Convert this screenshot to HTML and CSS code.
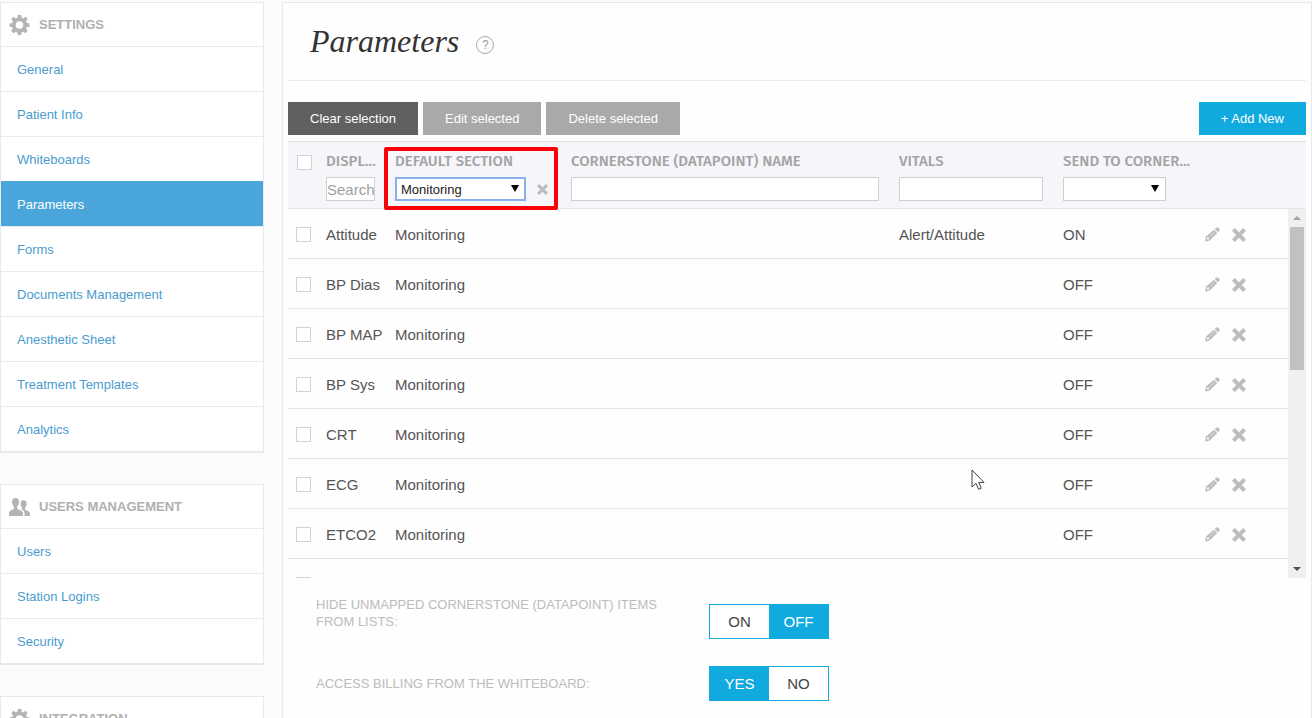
FILE: index.html
```html
<!DOCTYPE html>
<html lang="en">
<head>
  <meta charset="UTF-8">
  <meta name="viewport" content="width=device-width, initial-scale=1.0">
  <title>Parameters</title>
  <link rel="stylesheet" href="styles.css">
</head>
<body>
  <!-- Shared icons -->
  <svg class="sprite" aria-hidden="true">
    <symbol id="icon-gear" viewBox="0 0 20 20">
      <path fill-rule="evenodd" d="M8.300 0h3.400l.5 2.700 1.600.7L16 1.800 18.200 4l-1.600 2.300.7 1.600 2.700.5v3.300l-2.700.5-.7 1.600 1.600 2.300-2.200 2.200-2.300-1.600-1.600.7-.5 2.600H8.300l-.5-2.600-1.600-.7L4 18.300 1.700 16l1.600-2.300-.7-1.600L0 11.700V8.400l2.700-.5.7-1.600L1.800 4 4 1.800l2.300 1.600 1.500-.7zM10 6.200a3.800 3.800 0 1 0 0 7.600 3.800 3.800 0 0 0 0-7.600z"/>
    </symbol>
    <symbol id="icon-users" viewBox="0 0 21 18">
      <path d="M6.500 0C9 0 10.200 1.700 10 4.300c-.1 2-.8 3.200-1.700 4.200v2.300c.4 1 5.700 1.500 5.700 4.700V18H0v-2.500c0-3.200 4.300-3.700 4.900-4.700V8.500C3.900 7.500 3.200 6.300 3 4.300 2.800 1.700 4 0 6.500 0z"/>
      <path d="M14.600 2.200c2.100 0 3.200 1.400 3 3.700-.1 1.700-.7 2.700-1.400 3.500v2c.4 1 4.800 1.300 4.800 4.300V18h-5.500v-2.500c0-2.200-1.500-3.500-3.200-4.300.5-.4.7-.9.7-1.800-.8-.8-1.300-1.800-1.400-3.500-.2-2.300.9-3.700 3-3.700z"/>
    </symbol>
    <symbol id="icon-pencil" viewBox="0 0 16 16">
      <path fill-rule="evenodd" d="M11.800.8a1.800 1.800 0 0 1 2.400 0l1 1a1.800 1.800 0 0 1 0 2.400l-1.400 1.400-3.400-3.400zM9.600 3L13 6.400l-7.600 7.800-4 1.300a.8.8 0 0 1-1-1l.6-4.300zM3.100 11a1.200 1.200 0 1 0 0 2.400 1.200 1.200 0 0 0 0-2.400z"/>
      <path class="pencil-slit" d="M9.800 5.600L5.600 9.800"/>
    </symbol>
    <symbol id="icon-cross" viewBox="0 0 14 14">
      <path d="M2.800 0L7 4.200 11.200 0 14 2.800 9.800 7 14 11.200 11.200 14 7 9.800 2.800 14 0 11.200 4.200 7 0 2.800z"/>
    </symbol>
  </svg>

  <div class="layout">
    <aside class="sidebar">
      <nav class="panel">
        <h2><svg class="icon-head"><use href="#icon-gear"/></svg>SETTINGS</h2>
        <a href="#">General</a>
        <a href="#">Patient Info</a>
        <a href="#">Whiteboards</a>
        <a href="#" class="active">Parameters</a>
        <a href="#">Forms</a>
        <a href="#">Documents Management</a>
        <a href="#">Anesthetic Sheet</a>
        <a href="#">Treatment Templates</a>
        <a href="#">Analytics</a>
      </nav>
      <nav class="panel">
        <h2><svg class="icon-head"><use href="#icon-users"/></svg>USERS MANAGEMENT</h2>
        <a href="#">Users</a>
        <a href="#">Station Logins</a>
        <a href="#">Security</a>
      </nav>
      <nav class="panel">
        <h2><svg class="icon-head"><use href="#icon-gear"/></svg>INTEGRATION</h2>
      </nav>
    </aside>

    <main class="content">
      <header class="page-head">
        <h1>Parameters</h1>
        <button type="button" class="help">?</button>
      </header>

      <div class="toolbar">
        <button type="button" class="btn btn-dark">Clear selection</button>
        <button type="button" class="btn">Edit selected</button>
        <button type="button" class="btn">Delete selected</button>
        <button type="button" class="btn btn-add">+ Add New</button>
      </div>

      <div class="grid">
        <table>
          <thead>
            <tr>
              <th><input type="checkbox" class="check" aria-label="Select all"></th>
              <th>
                <label for="f-display">DISPL...</label>
                <input type="text" id="f-display" class="filter" placeholder="Search">
              </th>
              <th>
                <label for="f-section">DEFAULT SECTION</label>
                <div class="filter-row">
                  <span class="select select-section focused">
                    <select id="f-section"><option>Monitoring</option></select>
                  </span>
                  <button type="button" class="icon-btn" aria-label="Clear filter"><svg class="icon-clear"><use href="#icon-cross"/></svg></button>
                </div>
                <div class="highlight"></div>
              </th>
              <th>
                <label for="f-name">CORNERSTONE (DATAPOINT) NAME</label>
                <input type="text" id="f-name" class="filter">
              </th>
              <th>
                <label for="f-vitals">VITALS</label>
                <input type="text" id="f-vitals" class="filter">
              </th>
              <th>
                <label for="f-send">SEND TO CORNER...</label>
                <span class="select select-send">
                  <select id="f-send"><option></option></select>
                </span>
              </th>
              <th></th>
            </tr>
          </thead>
          <tbody>
            <tr>
              <td><input type="checkbox" class="check" aria-label="Attitude"></td>
              <td>Attitude</td><td>Monitoring</td><td></td><td>Alert/Attitude</td><td>ON</td>
              <td class="actions">
                <button type="button" class="icon-btn" aria-label="Edit"><svg class="icon-edit"><use href="#icon-pencil"/></svg></button>
                <button type="button" class="icon-btn" aria-label="Delete"><svg class="icon-delete"><use href="#icon-cross"/></svg></button>
              </td>
            </tr>
            <tr>
              <td><input type="checkbox" class="check" aria-label="BP Dias"></td>
              <td>BP Dias</td><td>Monitoring</td><td></td><td></td><td>OFF</td>
              <td class="actions">
                <button type="button" class="icon-btn" aria-label="Edit"><svg class="icon-edit"><use href="#icon-pencil"/></svg></button>
                <button type="button" class="icon-btn" aria-label="Delete"><svg class="icon-delete"><use href="#icon-cross"/></svg></button>
              </td>
            </tr>
            <tr>
              <td><input type="checkbox" class="check" aria-label="BP MAP"></td>
              <td>BP MAP</td><td>Monitoring</td><td></td><td></td><td>OFF</td>
              <td class="actions">
                <button type="button" class="icon-btn" aria-label="Edit"><svg class="icon-edit"><use href="#icon-pencil"/></svg></button>
                <button type="button" class="icon-btn" aria-label="Delete"><svg class="icon-delete"><use href="#icon-cross"/></svg></button>
              </td>
            </tr>
            <tr>
              <td><input type="checkbox" class="check" aria-label="BP Sys"></td>
              <td>BP Sys</td><td>Monitoring</td><td></td><td></td><td>OFF</td>
              <td class="actions">
                <button type="button" class="icon-btn" aria-label="Edit"><svg class="icon-edit"><use href="#icon-pencil"/></svg></button>
                <button type="button" class="icon-btn" aria-label="Delete"><svg class="icon-delete"><use href="#icon-cross"/></svg></button>
              </td>
            </tr>
            <tr>
              <td><input type="checkbox" class="check" aria-label="CRT"></td>
              <td>CRT</td><td>Monitoring</td><td></td><td></td><td>OFF</td>
              <td class="actions">
                <button type="button" class="icon-btn" aria-label="Edit"><svg class="icon-edit"><use href="#icon-pencil"/></svg></button>
                <button type="button" class="icon-btn" aria-label="Delete"><svg class="icon-delete"><use href="#icon-cross"/></svg></button>
              </td>
            </tr>
            <tr>
              <td><input type="checkbox" class="check" aria-label="ECG"></td>
              <td>ECG</td><td>Monitoring</td><td></td><td></td><td>OFF</td>
              <td class="actions">
                <button type="button" class="icon-btn" aria-label="Edit"><svg class="icon-edit"><use href="#icon-pencil"/></svg></button>
                <button type="button" class="icon-btn" aria-label="Delete"><svg class="icon-delete"><use href="#icon-cross"/></svg></button>
              </td>
            </tr>
            <tr>
              <td><input type="checkbox" class="check" aria-label="ETCO2"></td>
              <td>ETCO2</td><td>Monitoring</td><td></td><td></td><td>OFF</td>
              <td class="actions">
                <button type="button" class="icon-btn" aria-label="Edit"><svg class="icon-edit"><use href="#icon-pencil"/></svg></button>
                <button type="button" class="icon-btn" aria-label="Delete"><svg class="icon-delete"><use href="#icon-cross"/></svg></button>
              </td>
            </tr>
            <tr>
              <td><input type="checkbox" class="check" aria-label="Select row"></td>
              <td></td><td></td><td></td><td></td><td></td><td></td>
            </tr>
          </tbody>
        </table>
        <div class="scrollbar">
          <span class="arrow-up"></span>
          <span class="track"><span class="thumb"></span></span>
          <span class="arrow-down"></span>
        </div>
      </div>

      <form class="options">
        <div class="option" role="radiogroup" aria-labelledby="hide-label">
          <p id="hide-label">HIDE UNMAPPED CORNERSTONE (DATAPOINT) ITEMS FROM LISTS:</p>
          <div class="toggle">
            <label><input type="radio" name="hide">ON</label>
            <label><input type="radio" name="hide" checked>OFF</label>
          </div>
        </div>
        <div class="option" role="radiogroup" aria-labelledby="billing-label">
          <p id="billing-label">ACCESS BILLING FROM THE WHITEBOARD:</p>
          <div class="toggle">
            <label><input type="radio" name="billing" checked>YES</label>
            <label><input type="radio" name="billing">NO</label>
          </div>
        </div>
      </form>
    </main>
  </div>

  <svg class="cursor" viewBox="0 0 14 22" aria-hidden="true">
    <path d="M1 1v17l4-3.600 2.700 6 2.600-1.200-2.600-5.800H13z"/>
  </svg>
</body>
</html>
```
FILE: styles.css
```css
* {
  box-sizing: border-box;
}
body {
  margin: 0;
  background: #fbfbfe;
  color: #555;
  font-family: Arial, "Liberation Sans", sans-serif;
  font-size: 15px;
}
button,
input,
select {
  font-family: Arial, "Liberation Sans", sans-serif;
}
.sprite {
  display: none;
}
.layout {
  display: flex;
  gap: 18px;
  height: 100vh;
  padding-top: 2px;
  overflow: hidden;
}

/* Sidebar */
.sidebar {
  flex: 0 0 264px;
}
.panel {
  background: #fff;
  border: 1px solid #e9e9ec;
  border-bottom-width: 2px;
  margin-bottom: 31px;
}
.panel h2 {
  display: flex;
  align-items: center;
  gap: 9px;
  height: 43px;
  margin: 0;
  padding-left: 8px;
  color: #b0b0b0;
  font-size: 13px;
}
.panel a {
  display: flex;
  align-items: center;
  height: 45px;
  padding-left: 16px;
  border-top: 1px solid #ebebee;
  color: #4a9ccf;
  font-size: 13px;
  text-decoration: none;
}
.panel a.active {
  background: #49a5da;
  border-color: #49a5da;
  color: #fff;
}
.icon-head {
  width: 21px;
  height: 20px;
  fill: #b4b4b4;
}

/* Main area */
.content {
  flex: 1;
  min-width: 0;
  padding: 0 5px;
  background: #fefefe;
  border: 1px solid #e9e9ec;
  border-bottom: 0;
}
.page-head {
  display: flex;
  align-items: center;
  gap: 17px;
  height: 78px;
  padding-left: 22px;
  border-bottom: 1px solid #ebebeb;
}
h1 {
  margin: 0;
  color: #333;
  font-family: Georgia, "Liberation Serif", serif;
  font-size: 32px;
  font-style: italic;
  font-weight: normal;
}
.help {
  width: 18px;
  height: 18px;
  margin-top: 6px;
  padding: 0;
  border: 1px solid #aaa;
  border-radius: 50%;
  background: none;
  color: #999;
  font-size: 12px;
  line-height: 16px;
}
.toolbar {
  display: flex;
  gap: 5px;
  padding: 21px 0 6px;
}
.btn {
  height: 33px;
  padding: 0 22px;
  border: 0;
  background: #a9a9aa;
  color: #fff;
  font-size: 13px;
}
.btn-dark {
  background: #606060;
}
.btn-add {
  margin-left: auto;
  background: #10aade;
}

/* Parameters table */
.grid {
  position: relative;
}
table,
thead,
tbody {
  display: block;
}
tr {
  display: grid;
  grid-template-columns: 38px 69px 176px 1fr 164px 142px 101px;
}
thead {
  background: #f6f5f9;
  border-top: 1px solid #e0e0e0;
  border-bottom: 1px solid #e4e4e4;
}
th {
  position: relative;
  height: 66px;
  padding: 10px 20px 0 0;
  color: #a3a3a3;
  font-family: "Fira Sans", "Noto Sans", sans-serif;
  font-size: 15px;
  font-weight: 500;
  text-align: left;
  white-space: nowrap;
}
th label {
  display: block;
  margin-bottom: 6px;
  line-height: 19px;
}
tbody {
  height: 369px;
  margin-right: 18px;
  overflow: hidden;
}
tbody tr {
  height: 50px;
  border-bottom: 1px solid #e4e4e4;
  grid-template-columns: 38px 69px 176px 1fr 164px 142px 83px;
}
td {
  padding: 0;
  line-height: 51px;
  white-space: nowrap;
}
.check {
  display: block;
  appearance: none;
  width: 15px;
  height: 15px;
  margin: 18px 0 0 8px;
  border: 1px solid #d2d2d2;
  background: #fff;
}
thead .check {
  margin: 3px 0 0 9px;
}
.filter {
  display: block;
  width: 100%;
  height: 24px;
  padding: 0;
  border: 1px solid #cfcfcf;
  background: #fff;
  color: #555;
  font-size: 15px;
}
.filter::placeholder {
  color: #a0a0a0;
}
.filter-row {
  display: flex;
  align-items: center;
  gap: 11px;
}
.select {
  display: block;
  position: relative;
}
.select select {
  display: block;
  appearance: none;
  width: 100%;
  height: 24px;
  padding: 0 5px;
  border: 1px solid #cfcfcf;
  border-radius: 0;
  background: #fff;
  color: #222;
  font-size: 13px;
}
.select::after {
  content: "";
  position: absolute;
  top: 8px;
  right: 7px;
  border: solid transparent;
  border-width: 7px 4px 0;
  border-top-color: #000;
  pointer-events: none;
}
.focused select {
  border: 2px solid #8ab0ee;
  padding: 0 4px;
}
.select-section {
  flex: 0 0 131px;
}
.select-send {
  width: 103px;
}
.highlight {
  position: absolute;
  top: 5px;
  left: -11px;
  width: 174px;
  height: 63px;
  border: 4px solid #fb0007;
  border-radius: 2px;
  pointer-events: none;
}
.icon-btn {
  padding: 0;
  border: 0;
  background: none;
  line-height: 0;
}
.icon-btn svg {
  fill: #bdbdbd;
}
.pencil-slit {
  stroke: #e6e6e6;
  stroke-linecap: round;
}
.actions {
  display: flex;
  align-items: center;
  gap: 12px;
}
.icon-edit {
  width: 15px;
  height: 15px;
}
.icon-delete {
  width: 14px;
  height: 14px;
}
.icon-clear {
  width: 11px;
  height: 11px;
}

/* Scrollbar beside the rows */
.scrollbar {
  position: absolute;
  top: 68px;
  right: 0;
  bottom: 0;
  width: 18px;
  display: flex;
  flex-direction: column;
  align-items: center;
  background: #f0eff1;
}
.arrow-up,
.arrow-down {
  margin: 7px 0;
  border: solid transparent;
}
.arrow-up {
  border-width: 0 4px 4px;
  border-bottom-color: #a3a3a3;
}
.arrow-down {
  border-width: 4px 4px 0;
  border-top-color: #505050;
}
.track {
  flex: 1;
  width: 14px;
}
.thumb {
  display: block;
  height: 43%;
  background: #c1c1c1;
}

/* Options under the table */
.options {
  display: grid;
  gap: 27px;
  padding: 18px 0 0 28px;
}
.option {
  display: flex;
  align-items: flex-end;
}
.option p {
  flex: 0 0 393px;
  margin: 0;
  padding: 0 40px 9px 0;
  color: #bcbcbc;
  font-size: 13px;
  line-height: 17px;
}
.toggle {
  display: grid;
  grid-template-columns: 1fr 1fr;
  width: 120px;
  height: 35px;
  border: 1px solid #10aade;
}
.toggle label {
  display: flex;
  align-items: center;
  justify-content: center;
  background: #fff;
  color: #444;
}
.toggle label:has(:checked) {
  background: #10aade;
  color: #fff;
}
.toggle input {
  appearance: none;
  width: 0;
  height: 0;
  margin: 0;
}

/* Mouse pointer */
.cursor {
  position: absolute;
  top: 469px;
  left: 971px;
  width: 14px;
  height: 22px;
  fill: #fff;
  stroke: #444;
}
```
